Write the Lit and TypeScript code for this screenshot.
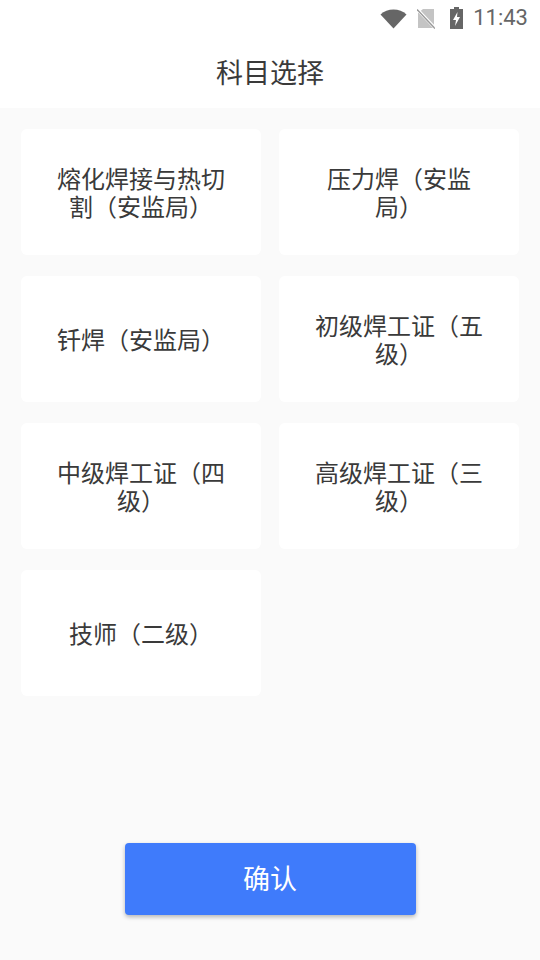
import { LitElement, html, css } from "lit";
import { customElement } from "lit/decorators.js";

const SUBJECTS = [
  "熔化焊接与热切割（安监局）",
  "压力焊（安监局）",
  "钎焊（安监局）",
  "初级焊工证（五级）",
  "中级焊工证（四级）",
  "高级焊工证（三级）",
  "技师（二级）",
];

@customElement("app-root")
export class AppRoot extends LitElement {
  static styles = css`
    :host {
      display: block;
      width: 540px;
      height: 960px;
      overflow: hidden;
      font-family: "Roboto", "Noto Sans CJK SC", sans-serif;
      background: #fafafa;
    }
    .page { display: flex; flex-direction: column; height: 960px; }
    .top { background: #fff; height: 108px; flex: none; }
    .status {
      height: 36px;
      display: flex;
      align-items: center;
      justify-content: flex-end;
      padding-right: 12px;
    }
    .status svg { display: block; flex: none; }
    .wifi { margin-right: 10px; }
    .sim { margin-right: 14px; }
    .batt { margin-right: 9px; }
    .time { font-size: 22px; line-height: 36px; color: #666; }
    .title {
      height: 70px;
      padding-bottom: 2px;
      display: flex;
      align-items: center;
      justify-content: center;
      font-size: 27px;
      color: #3a3a3a;
    }
    .grid {
      display: grid;
      grid-template-columns: 240px 240px;
      grid-auto-rows: 126px;
      column-gap: 18px;
      row-gap: 21px;
      padding: 21px 21px 0;
    }
    .card {
      box-sizing: border-box;
      background: #fff;
      border-radius: 6px;
      display: flex;
      align-items: center;
      justify-content: center;
      text-align: center;
      padding: 4px 36px 0;
      font-size: 24px;
      line-height: 28px;
      color: #3a3a3a;
    }
    .foot {
      margin-top: auto;
      padding-bottom: 45px;
      display: flex;
      justify-content: center;
    }
    .confirm {
      width: 291px;
      height: 72px;
      border: 0;
      border-radius: 4px;
      background: #3f7bfb;
      color: #fff;
      font: inherit;
      font-size: 27px;
      box-shadow: 0 2px 4px rgba(0, 0, 0, 0.28);
      padding: 0 0 4px;
    }
  `;

  render() {
    return html`
      <div class="page">
        <div class="top">
          <div class="status">
            <svg class="wifi" width="27" height="21" viewBox="0 0 27 21">
              <path d="M0.5 6.5C4 3.2 8.5 1.5 13.5 1.5S23 3.2 26.500 6.500L13.500 20.500Z" fill="#666" />
            </svg>
            <svg class="sim" width="18" height="21" viewBox="0 0 18 21">
              <path d="M6 1H17V20H1V5Z" fill="#c4c4c4" />
              <path d="M0 1L18 20" stroke="#fff" stroke-width="3" />
              <path d="M0 1.500L18 20.500" stroke="#9a9a9a" stroke-width="1.500" />
            </svg>
            <svg class="batt" width="15" height="23" viewBox="0 0 15 23">
              <path d="M5 0H10V2H14V22H1V2H5Z" fill="#666" />
              <path d="M8.500 5L4 13H7L6 19L11 10H8Z" fill="#fff" />
            </svg>
            <span class="time">11:43</span>
          </div>
          <div class="title">科目选择</div>
        </div>
        <div class="grid">
          ${SUBJECTS.map((s) => html`<div class="card">${s}</div>`)}
        </div>
        <div class="foot"><button class="confirm">确认</button></div>
      </div>
    `;
  }
}
